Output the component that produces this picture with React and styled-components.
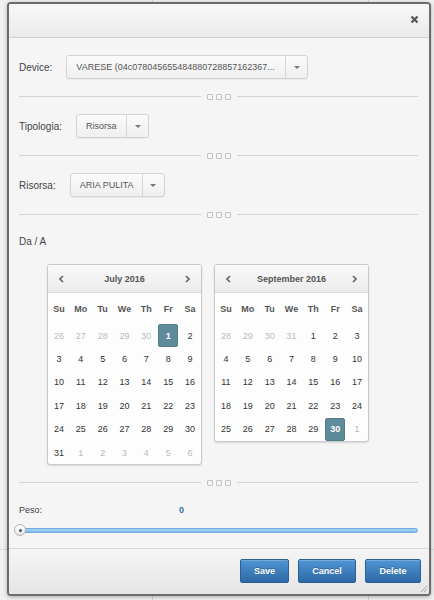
import React from "react";
import styled, { createGlobalStyle } from "styled-components";

const GlobalStyle = createGlobalStyle`
  html, body { margin: 0; height: 100%; }
  body {
    font-family: "Liberation Sans", Arial, sans-serif;
    background:
      linear-gradient(#dcdcdc, #dcdcdc) 0 549px / 100% 1px no-repeat,
      linear-gradient(#d6d6d6, #d6d6d6) 152px 0 / 1px 100% no-repeat,
      linear-gradient(#d6d6d6, #d6d6d6) 368px 0 / 1px 100% no-repeat,
      #f1f1f1;
  }
`;

const Page = styled.div`
  box-sizing: border-box;
  height: 600px;
  padding: 2px 3px 4px 7px;
`;

const Modal = styled.div`
  position: relative;
  box-sizing: border-box;
  width: 424px;
  height: 594px;
  border: 2px solid #6c6c6c;
  border-radius: 4px;
  background: #f5f5f5;
  display: flex;
  flex-direction: column;
  overflow: hidden;
  box-shadow: 0 1px 4px rgba(0, 0, 0, 0.3);
`;

const Header = styled.div`
  box-sizing: border-box;
  height: 34px;
  flex-shrink: 0;
  display: flex;
  justify-content: flex-end;
  align-items: center;
  padding: 0 10px 2px 0;
  background: linear-gradient(#f8f8f8, #eaeaea);
  border-bottom: 1px solid #d2d2d2;
`;

const Body = styled.div`
  flex: 1;
  display: flex;
  flex-direction: column;
  padding: 17px 11px 0 10px;
`;

const Row = styled.div`
  display: flex;
  align-items: center;
  height: 24px;
`;

const Label = styled.span`
  font-size: 10px;
  color: #444;
  margin-right: 14px;
`;

const Select = styled.div`
  box-sizing: border-box;
  display: flex;
  align-items: stretch;
  height: 24px;
  width: ${(p) => p.$w}px;
  border: 1px solid #d3d3d3;
  border-radius: 3px;
  background: linear-gradient(#fbfbfb, #efefef);
  box-shadow: 0 1px 1px rgba(0, 0, 0, 0.05);
`;

const SelectText = styled.span`
  flex: 1;
  display: flex;
  align-items: center;
  padding: 0 8px 0 9px;
  font-size: 9px;
  color: #555;
  white-space: nowrap;
  overflow: hidden;
`;

const Arrow = styled.span`
  width: 21px;
  flex-shrink: 0;
  border-left: 1px solid #d6d6d6;
  display: flex;
  align-items: center;
  justify-content: center;
  &::after {
    content: "";
    border-left: 3px solid transparent;
    border-right: 3px solid transparent;
    border-top: 3px solid #777;
  }
`;

const Sep = styled.div`
  display: flex;
  align-items: center;
  gap: 6px;
  height: 7px;
  margin: ${(p) => p.$m || "14px 0"};
`;

const SepLine = styled.div`
  flex: 1;
  height: 1px;
  background: #d4d4d4;
`;

const Dots = styled.div`
  display: flex;
  gap: 3px;
`;

const Dot = styled.span`
  box-sizing: border-box;
  width: 6px;
  height: 6px;
  border: 1px solid #c2c2c2;
  border-radius: 1px;
  background: #f8f8f8;
`;

const Caption = styled.div`
  font-size: 10px;
  line-height: 12px;
  color: #444;
  margin-top: 18px;
`;

const CalRow = styled.div`
  display: flex;
  align-items: flex-start;
  gap: 12px;
  margin: 16px 0 0 28px;
`;

const CalBox = styled.div`
  width: 153px;
  border: 1px solid #c9c9c9;
  border-radius: 3px;
  background: #fdfdfd;
  box-shadow: 0 1px 2px rgba(0, 0, 0, 0.12);
  overflow: hidden;
`;

const CalHead = styled.div`
  box-sizing: border-box;
  height: 28px;
  display: flex;
  align-items: center;
  justify-content: space-between;
  padding: 0 11px;
  background: linear-gradient(#fafafa, #ebebeb);
  border-bottom: 1px solid #d8d8d8;
`;

const CalTitle = styled.span`
  font-size: 9px;
  font-weight: bold;
  color: #555;
`;

const CalGrid = styled.div`
  display: grid;
  grid-template-columns: repeat(7, 1fr);
  grid-template-rows: 31px;
  grid-auto-rows: 23.4px;
`;

const DayName = styled.span`
  display: flex;
  align-items: center;
  justify-content: center;
  font-size: 9px;
  font-weight: bold;
  color: #555;
`;

const Day = styled.span`
  box-sizing: border-box;
  display: flex;
  align-items: center;
  justify-content: center;
  font-size: 9px;
  color: ${(p) => (p.$muted ? "#bbb" : "#333")};
  ${(p) =>
    p.$sel &&
    `
    margin: 0 1px;
    background: #5e8b99;
    border: 1px solid #527e8c;
    border-radius: 2px;
    color: #fff;
    font-weight: bold;
  `}
`;

const PesoRow = styled.div`
  display: flex;
  align-items: center;
  height: 12px;
  margin-top: 18px;
  font-size: 9px;
`;

const PesoLabel = styled.span`
  width: 160px;
  color: #444;
`;

const PesoValue = styled.span`
  font-weight: bold;
  color: #3c6fa6;
`;

const Slider = styled.div`
  position: relative;
  display: flex;
  align-items: center;
  height: 12px;
  margin: 8px 0 0 -4px;
`;

const Track = styled.div`
  flex: 1;
  box-sizing: border-box;
  height: 5px;
  border: 1px solid #71aadb;
  border-radius: 3px;
  background: linear-gradient(#a6d3f5, #80bdea);
`;

const Handle = styled.span`
  position: absolute;
  left: -1px;
  top: 0;
  box-sizing: border-box;
  width: 12px;
  height: 12px;
  border: 1px solid #b4b4b4;
  border-radius: 50%;
  background: linear-gradient(#ffffff, #e6e6e6);
  display: flex;
  align-items: center;
  justify-content: center;
  &::after {
    content: "";
    width: 3px;
    height: 3px;
    border-radius: 50%;
    background: #555;
  }
`;

const Footer = styled.div`
  height: 44px;
  flex-shrink: 0;
  display: flex;
  justify-content: flex-end;
  align-items: center;
  gap: 9px;
  padding: 0 8px 1px 0;
  border-top: 1px solid #d9d9d9;
  background: linear-gradient(#f5f5f5, #e5e5e5);
`;

const Button = styled.button`
  box-sizing: border-box;
  width: ${(p) => p.$w}px;
  height: 24px;
  padding: 0;
  border: 1px solid #2c5f93;
  border-radius: 2px;
  background: linear-gradient(#5095d4, #2d69a6);
  color: #fff;
  font-family: "Liberation Sans", Arial, sans-serif;
  font-size: 9px;
  font-weight: bold;
  text-shadow: 0 -1px 0 rgba(0, 0, 0, 0.25);
  box-shadow: inset 0 1px 0 rgba(255, 255, 255, 0.2);
`;

const Grip = styled.svg`
  position: absolute;
  right: 1px;
  bottom: 1px;
`;

const WEEK = ["Su", "Mo", "Tu", "We", "Th", "Fr", "Sa"];

const range = (a, b, extra = {}) =>
  Array.from({ length: b - a + 1 }, (_, i) => ({ d: a + i, ...extra }));

const july = [
  ...range(26, 30, { muted: true }),
  { d: 1, sel: true },
  ...range(2, 31),
  ...range(1, 6, { muted: true }),
];

const september = [
  ...range(28, 31, { muted: true }),
  ...range(1, 29),
  { d: 30, sel: true },
  { d: 1, muted: true },
];

function Chevron({ left }) {
  return (
    <svg width="5" height="8" viewBox="0 0 5 8">
      <polyline
        points={left ? "4,1 1,4 4,7" : "1,1 4,4 1,7"}
        fill="none"
        stroke="#666"
        strokeWidth="1.6"
      />
    </svg>
  );
}

function Calendar({ title, days }) {
  return (
    <CalBox>
      <CalHead>
        <Chevron left />
        <CalTitle>{title}</CalTitle>
        <Chevron />
      </CalHead>
      <CalGrid>
        {WEEK.map((w) => (
          <DayName key={w}>{w}</DayName>
        ))}
        {days.map((x, i) => (
          <Day key={i} $muted={x.muted} $sel={x.sel}>
            {x.d}
          </Day>
        ))}
      </CalGrid>
    </CalBox>
  );
}

function Separator({ m }) {
  return (
    <Sep $m={m}>
      <SepLine />
      <Dots>
        <Dot />
        <Dot />
        <Dot />
      </Dots>
      <SepLine />
    </Sep>
  );
}

export default function App() {
  return (
    <Page>
      <GlobalStyle />
      <Modal>
        <Header>
          <svg width="9" height="9" viewBox="0 0 9 9">
            <path d="M1.5 1.5 L7.5 7.5 M7.5 1.5 L1.5 7.5" stroke="#555" strokeWidth="2.2" />
          </svg>
        </Header>
        <Body>
          <Row>
            <Label>Device:</Label>
            <Select $w={242}>
              <SelectText>VARESE (04c078045655484880728857162367...</SelectText>
              <Arrow />
            </Select>
          </Row>
          <Separator />
          <Row>
            <Label>Tipologia:</Label>
            <Select $w={73}>
              <SelectText>Risorsa</SelectText>
              <Arrow />
            </Select>
          </Row>
          <Separator />
          <Row>
            <Label>Risorsa:</Label>
            <Select $w={95}>
              <SelectText>ARIA PULITA</SelectText>
              <Arrow />
            </Select>
          </Row>
          <Separator m="14px 0 0" />
          <Caption>Da / A</Caption>
          <CalRow>
            <Calendar title="July 2016" days={july} />
            <Calendar title="September 2016" days={september} />
          </CalRow>
          <Separator m="14px 0 0" />
          <PesoRow>
            <PesoLabel>Peso:</PesoLabel>
            <PesoValue>0</PesoValue>
          </PesoRow>
          <Slider>
            <Track />
            <Handle />
          </Slider>
        </Body>
        <Footer>
          <Button $w={49}>Save</Button>
          <Button $w={58}>Cancel</Button>
          <Button $w={56}>Delete</Button>
        </Footer>
        <Grip width="9" height="9" viewBox="0 0 9 9">
          <path d="M8 2 L2 8 M8 5 L5 8 M8 8 L8 8" stroke="#aaa" strokeWidth="1" />
        </Grip>
      </Modal>
    </Page>
  );
}
